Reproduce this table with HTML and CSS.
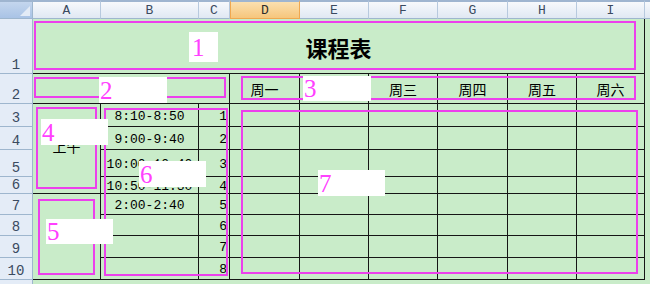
FILE: index.html
```html
<!DOCTYPE html>
<html lang="zh">
<head>
<meta charset="utf-8">
<title>课程表</title>
<link rel="stylesheet" href="styles.css">
</head>
<body>
<div class="sheet">
  <div class="grid">
    <div class="corner"><svg class="tri" width="10" height="10" viewBox="0 0 10 10"><polygon points="10,0 10,10 0,10" fill="#e3ebf6"/></svg></div>
    <div class="ch">A</div><div class="ch">B</div><div class="ch">C</div><div class="ch sel">D</div><div class="ch">E</div><div class="ch">F</div><div class="ch">G</div><div class="ch">H</div><div class="ch">I</div><div class="ch last"></div>

    <div class="rh">1</div>
    <div class="c title span9 br bb">课程表</div>
    <div class="c"></div>

    <div class="rh">2</div>
    <div class="c span3 br bb"></div>
    <div class="c day br bb">周一</div><div class="c day br bb">周二</div><div class="c day br bb">周三</div><div class="c day br bb">周四</div><div class="c day br bb">周五</div><div class="c day br bb">周六</div>
    <div class="c"></div>

    <div class="rh">3</div>
    <div class="c half rspan4 br bb">上午</div>
    <div class="c time br bb">8:10-8:50</div><div class="c num br bb">1</div>
    <div class="c br bb"></div><div class="c br bb"></div><div class="c br bb"></div><div class="c br bb"></div><div class="c br bb"></div><div class="c br bb"></div>
    <div class="c"></div>

    <div class="rh">4</div>
    <div class="c time br bb">9:00-9:40</div><div class="c num br bb">2</div>
    <div class="c br bb"></div><div class="c br bb"></div><div class="c br bb"></div><div class="c br bb"></div><div class="c br bb"></div><div class="c br bb"></div>
    <div class="c"></div>

    <div class="rh">5</div>
    <div class="c time br bb">10:00-10:40</div><div class="c num br bb">3</div>
    <div class="c br bb"></div><div class="c br bb"></div><div class="c br bb"></div><div class="c br bb"></div><div class="c br bb"></div><div class="c br bb"></div>
    <div class="c"></div>

    <div class="rh">6</div>
    <div class="c time br bb">10:50-11:30</div><div class="c num br bb">4</div>
    <div class="c br bb"></div><div class="c br bb"></div><div class="c br bb"></div><div class="c br bb"></div><div class="c br bb"></div><div class="c br bb"></div>
    <div class="c"></div>

    <div class="rh">7</div>
    <div class="c half rspan4 br bb"></div>
    <div class="c time br bb">2:00-2:40</div><div class="c num br bb">5</div>
    <div class="c br bb"></div><div class="c br bb"></div><div class="c br bb"></div><div class="c br bb"></div><div class="c br bb"></div><div class="c br bb"></div>
    <div class="c"></div>

    <div class="rh">8</div>
    <div class="c time br bb"></div><div class="c num br bb">6</div>
    <div class="c br bb"></div><div class="c br bb"></div><div class="c br bb"></div><div class="c br bb"></div><div class="c br bb"></div><div class="c br bb"></div>
    <div class="c"></div>

    <div class="rh">9</div>
    <div class="c time br bb"></div><div class="c num br bb">7</div>
    <div class="c br bb"></div><div class="c br bb"></div><div class="c br bb"></div><div class="c br bb"></div><div class="c br bb"></div><div class="c br bb"></div>
    <div class="c"></div>

    <div class="rh">10</div>
    <div class="c time br bb"></div><div class="c num br bb">8</div>
    <div class="c br bb"></div><div class="c br bb"></div><div class="c br bb"></div><div class="c br bb"></div><div class="c br bb"></div><div class="c br bb"></div>
    <div class="c"></div>

    <div class="rh"></div>
    <div class="c"></div><div class="c"></div><div class="c"></div><div class="c"></div><div class="c"></div><div class="c"></div><div class="c"></div><div class="c"></div><div class="c"></div><div class="c"></div>
  </div>

  <div class="notes">
    <div class="box b1"></div>
    <div class="box b2"></div>
    <div class="box b3"></div>
    <div class="box b4"></div>
    <div class="box b5"></div>
    <div class="box b6"></div>
    <div class="box b7"></div>
    <div class="lbl l1">1</div>
    <div class="lbl l2">2</div>
    <div class="lbl l3">3</div>
    <div class="lbl l4">4</div>
    <div class="lbl l5">5</div>
    <div class="lbl l6">6</div>
    <div class="lbl l7">7</div>
  </div>
</div>
</body>
</html>
```

FILE: styles.css
```css
* { box-sizing: border-box; }
html, body { margin: 0; padding: 0; background: #c9ecc9; }
body { width: 650px; height: 284px; overflow: hidden; }

.sheet { position: relative; width: 650px; height: 284px; overflow: hidden; }

.grid {
  display: grid;
  grid-template-columns: 33px 68px 98px 31px 70px 69px 69px 70px 69px 68px 40px;
  grid-template-rows: 19px 55px 30px 23px 23px 27px 17px 21px 21px 22px 22px 22px;
}

.corner {
  background: linear-gradient(#c4d6ee, #a9c3e6);
  border-top: 2px solid #9fb5d0;
  border-right: 1px solid #9eb6ce;
  border-bottom: 1px solid #9eb6ce;
  display: flex;
  justify-content: flex-end;
  align-items: flex-end;
  padding: 0 2px 2px 0;
}
.tri { display: block; }

.ch {
  background: linear-gradient(#f7f9fc, #e0e8f3);
  border-top: 2px solid #9fb5d0;
  border-right: 1px solid #b7c9de;
  border-bottom: 1px solid #9eb6ce;
  font-family: "Liberation Mono", "DejaVu Sans Mono", monospace;
  font-size: 13px;
  color: #3a4a60;
  display: flex;
  align-items: center;
  justify-content: center;
  padding-top: 1px;
}
.ch.sel {
  background: linear-gradient(#fbe0b0, #f6c67c);
  border-left: 1px solid #f0a850;
  border-right: 1px solid #f0a850;
  border-bottom-color: #f0a850;
  color: #2c2c2c;
}

.rh {
  background: #e4ecf7;
  border-right: 1px solid #9eb6ce;
  border-bottom: 1px solid #9eb6ce;
  font-family: "Liberation Mono", "DejaVu Sans Mono", monospace;
  font-size: 14px;
  color: #3a4a60;
  display: flex;
  align-items: flex-end;
  justify-content: center;
  line-height: 13px;
  padding-bottom: 1px;
}

.c {
  background: #c9ecc9;
  display: flex;
  align-items: center;
  justify-content: center;
  color: #000;
  overflow: visible;
  white-space: nowrap;
}
.br { border-right: 1px solid #161616; }
.bb { border-bottom: 1px solid #161616; }

.span9 { grid-column: span 9; }
.span3 { grid-column: span 3; }
.rspan4 { grid-row: span 4; }

.title {
  font-family: "Noto Sans CJK SC", sans-serif;
  font-weight: 700;
  font-size: 22px;
  padding-top: 1px;
}
.day, .half {
  font-family: "Noto Sans CJK SC", sans-serif;
  font-size: 14px;
}
.half { padding-bottom: 6px; }
.time {
  font-family: "Liberation Mono", "DejaVu Sans Mono", monospace;
  font-size: 13px;
  padding-top: 2px;
}
.num {
  justify-content: flex-end;
  padding-right: 2px;
  padding-top: 2px;
  font-family: "Liberation Mono", "DejaVu Sans Mono", monospace;
  font-size: 13px;
}

.notes { position: absolute; left: 0; top: 0; width: 650px; height: 284px; pointer-events: none; }
.box { position: absolute; border: 2px solid #ec40ec; }
.b1 { left: 34px; top: 21px; width: 602px; height: 49px; }
.b2 { left: 34px; top: 77px; width: 192px; height: 21px; }
.b3 { left: 241px; top: 76px; width: 395px; height: 24px; }
.b4 { left: 36px; top: 107px; width: 61px; height: 82px; }
.b5 { left: 38px; top: 199px; width: 57px; height: 76px; }
.b6 { left: 104px; top: 108px; width: 124px; height: 168px; }
.b7 { left: 241px; top: 110px; width: 397px; height: 164px; }

.lbl {
  position: absolute;
  background: #fff;
  color: #ff40ff;
  font-family: "Liberation Serif", serif;
  font-size: 25px;
  display: flex;
  align-items: center;
  padding-left: 1px;
  line-height: 1;
}
.l1 { left: 189px; top: 32px; width: 29px; height: 30px; padding-left: 3px; }
.l2 { left: 99px; top: 77px; width: 68px; height: 26px; }
.l3 { left: 303px; top: 76px; width: 68px; height: 25px; }
.l4 { left: 41px; top: 119px; width: 67px; height: 26px; }
.l5 { left: 46px; top: 219px; width: 67px; height: 25px; }
.l6 { left: 139px; top: 161px; width: 67px; height: 26px; }
.l7 { left: 318px; top: 170px; width: 67px; height: 26px; }
```
